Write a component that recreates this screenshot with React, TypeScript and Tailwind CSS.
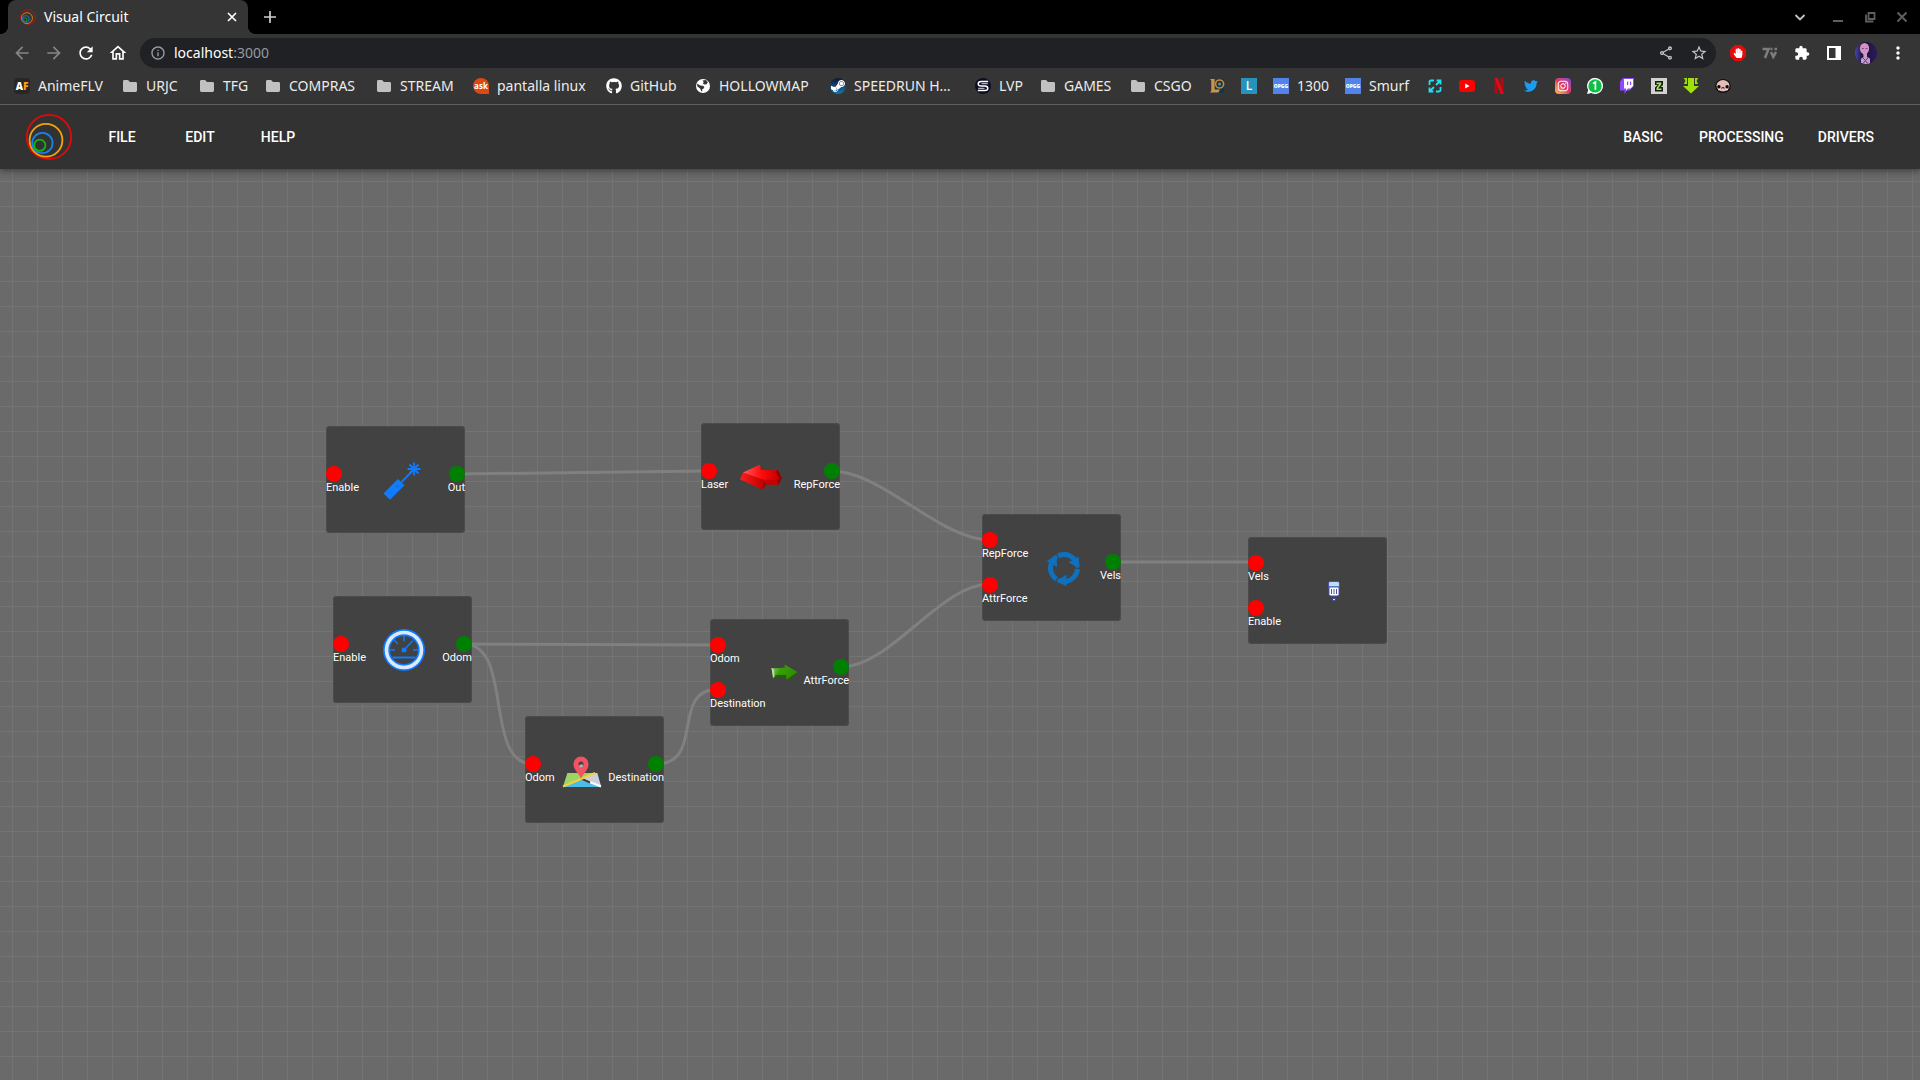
import type { ReactNode } from "react";
import { FaGithub, FaSteamSymbol, FaTwitter, FaInstagram, FaHandPaper } from "react-icons/fa";
import { MdArrowBack, MdArrowForward, MdRefresh, MdOutlineHome, MdExtension, MdMoreVert, MdStarOutline, MdOutlineInfo, MdOutlineShare } from "react-icons/md";

/* ---------- Brand mark ---------- */

function CircuitLogo({ className, dim }: { className: string; dim?: boolean }) {
  return (
    <svg viewBox="0 0 48 48" fill="none" strokeWidth={dim ? 3 : 1.8} opacity={dim ? 0.75 : 1} className={className} aria-hidden="true">
      <circle cx="24" cy="24" r="22.2" stroke="#e60808" />
      <circle cx="21" cy="27.3" r="16.4" stroke="#f5a10c" />
      <circle cx="17.4" cy="30" r="10.2" stroke="#1485ec" />
      <circle cx="14.8" cy="32.3" r="5.6" stroke="#14b314" />
    </svg>
  );
}

/* ---------- Bookmark icons ---------- */

function Svg16({ children }: { children: ReactNode }) {
  return (
    <svg viewBox="0 0 16 16" className="size-4 shrink-0" aria-hidden="true">
      {children}
    </svg>
  );
}

const folder = (
  <Svg16>
    <path d="M1 3.4Q1 2 2.4 2H6l2 2h5.6Q15 4 15 5.4v7.2q0 1.4-1.4 1.4H2.4Q1 14 1 12.6z" fill="#c1c1c1" />
  </Svg16>
);

const animeIcon = (
  <span className="flex size-4 shrink-0 items-center justify-center rounded-sm bg-[#272727] font-['Open_Sans',sans-serif] text-[10px] leading-none font-extrabold text-white">
    A<span className="text-[#ff9d14]">F</span>
  </span>
);

const askIcon = (
  <span className="flex size-4 shrink-0 items-center justify-center rounded-full rounded-br-xs bg-[#dd4814] font-['Open_Sans',sans-serif] text-[8px] leading-none font-bold text-white">
    ask
  </span>
);

const githubIcon = <FaGithub className="size-4 shrink-0 text-white" />;

const globeIcon = (
  <Svg16>
    <circle cx="8" cy="8" r="7" fill="#fff" />
    <path d="M2.3 5.6 5 7.4l3 .3 1.4 1.4-1 1.6-1.2.6v2.4l-1-.6-.9-2.4-3.1-2.5z M7.5 2.4 11 2l1.8 2.2-1.2 2-2.6.2-1.2-1.2 1-1z" fill="#343434" />
  </Svg16>
);

const steamIcon = (
  <span className="flex size-4 shrink-0 items-center justify-center overflow-hidden rounded-full bg-linear-to-b from-[#0c1735] to-[#1378ae]">
    <FaSteamSymbol className="size-4 text-white" />
  </span>
);

const lvpIcon = (
  <Svg16>
    <circle cx="8" cy="8" r="8" fill="#0c0c24" />
    <path d="M13.200 3.400H6.200Q3.200 3.400 3.200 5.700T6.200 8h3.600q3 0 3 2.300t-3 2.300H2.800" fill="none" stroke="#fff" strokeWidth="1.500" />
    <path d="M12.800 5.700H6.500M9.500 10.300H3.200" stroke="#d8d8e4" strokeWidth="1" />
  </Svg16>
);

const leagueIcon = (
  <Svg16>
    <path d="M9 1h6v14H5z" fill="#12364a" />
    <circle cx="10.6" cy="6" r="4" fill="none" stroke="#c08b3c" strokeWidth="1.6" />
    <circle cx="10.6" cy="6" r="1.5" fill="#6f8c86" />
    <path d="M1 1h4.600v10.500H11L9.400 14.600H1l1.300-1.800V2.600z" fill="#c9964a" />
  </Svg16>
);

const letterIcon = (
  <span className="flex size-4 shrink-0 items-center justify-center bg-[#2792ba] font-['Open_Sans',sans-serif] text-[12px] leading-none font-semibold text-white">
    L
  </span>
);

const opggIcon = (
  <span className="flex size-4 shrink-0 items-center justify-center bg-[#5383e8] font-['Open_Sans',sans-serif] text-[5px] leading-none font-extrabold text-white">
    OPGG
  </span>
);

const expandIcon = (
  <Svg16>
    <path d="M7 2.5H4Q2.5 2.5 2.5 4v3M9 13.5h3q1.5 0 1.5-1.5V9M9.6 2.5h3.9v3.9M6.4 13.5H2.5V9.6M13 3 9 7M3 13l4-4" fill="none" stroke="#1be3f7" strokeWidth="1.8" />
  </Svg16>
);

const youtubeIcon = (
  <Svg16>
    <rect x="0" y="2" width="16" height="12" rx="3" fill="#f00" />
    <path d="m6.2 5.6 4.4 2.4-4.4 2.4z" fill="#fff" />
  </Svg16>
);

const netflixIcon = (
  <Svg16>
    <path d="M3.600 0h3v16h-3zM9.600 0h3v16h-3z" fill="#b5090f" />
    <path d="M3.600 0h3l6 16h-3z" fill="#e50914" />
  </Svg16>
);

const twitterIcon = <FaTwitter className="size-4 shrink-0 p-px text-[#1d9bf0]" />;

const instagramIcon = (
  <span className="flex size-4 shrink-0 items-center justify-center rounded-sm bg-linear-to-tr from-[#fdc04b] via-[#e8305f] to-[#7a3bd0]">
    <FaInstagram className="size-3 text-white" />
  </span>
);

const whatsappIcon = (
  <Svg16>
    <path d="M0 16 1.2 12A8 8 0 1 1 4.4 15z" fill="#fff" />
    <circle cx="8" cy="7.9" r="6.7" fill="#0bbf47" />
    <path d="M6 5.4 8.4 4v7.8" fill="none" stroke="#fff" strokeWidth="1.7" />
  </Svg16>
);

const twitchIcon = (
  <Svg16>
    <path d="M4 0h11v8l-4.5 4.5H8L5.500 16V12.500H1V3.500z" fill="#9146ff" />
    <path d="M5 1h9v7l-2.500 2.500H9L7 12.400V10.500H5z" fill="#fff" />
    <path d="M8 3.500h1.200v3.500H8zM11 3.500h1.200v3.500H11z" fill="#9146ff" />
  </Svg16>
);

const zIcon = (
  <Svg16>
    <path d="M0 0h16v16H0z" fill="#d2d2d2" />
    <path d="M4 3h8v4L9.800 9H12v4.500H4V9.500L6.500 7H4z" fill="#151d10" />
    <path d="M5.500 4.500h4.800v1.700L7 10.500h3.500v1.500H5.500v-2l2.700-3.800H5.500z" fill="#a4e05d" />
  </Svg16>
);

const downloadIcon = (
  <Svg16>
    <path d="M5 0h6v8h5l-8 7.500L0 8h5z" fill="#a0e10d" />
    <path d="M1.200 0H4v6H1.200V4.500h1V1.500h-1zM14.800 0H12v6h2.800V4.500h-1V1.500h1z" fill="#a0e10d" />
  </Svg16>
);

const faceIcon = (
  <Svg16>
    <ellipse cx="8" cy="8" rx="7.800" ry="7" fill="#130d0d" />
    <ellipse cx="8" cy="7.800" rx="6.500" ry="5.700" fill="#e4bdb7" />
    <circle cx="3.900" cy="8.800" r="1.700" fill="#0a0808" />
    <circle cx="12.100" cy="8.800" r="1.700" fill="#0a0808" />
    <path d="M3 11h2v1.200H3zM11 11h2v1.200h-2z" fill="#cfeaf5" />
    <path d="M6.400 10.200q1.600-1.200 3.200 0" stroke="#0a0808" fill="none" />
  </Svg16>
);

const bookmarks: { name: string; icon: ReactNode; text?: string; width: string }[] = [
  { name: "AnimeFLV", icon: animeIcon, text: "AnimeFLV", width: "w-[92px]" },
  { name: "URJC", icon: folder, text: "URJC", width: "w-[61px]" },
  { name: "TFG", icon: folder, text: "TFG", width: "w-[50px]" },
  { name: "COMPRAS", icon: folder, text: "COMPRAS", width: "w-[95px]" },
  { name: "STREAM", icon: folder, text: "STREAM", width: "w-[81px]" },
  { name: "pantalla linux", icon: askIcon, text: "pantalla linux", width: "w-[117px]" },
  { name: "GitHub", icon: githubIcon, text: "GitHub", width: "w-[73px]" },
  { name: "HOLLOWMAP", icon: globeIcon, text: "HOLLOWMAP", width: "w-[119px]" },
  { name: "Speedrun", icon: steamIcon, text: "SPEEDRUN H…", width: "w-[129px]" },
  { name: "LVP", icon: lvpIcon, text: "LVP", width: "w-[49px]" },
  { name: "GAMES", icon: folder, text: "GAMES", width: "w-[74px]" },
  { name: "CSGO", icon: folder, text: "CSGO", width: "w-[63px]" },
  { name: "League", icon: leagueIcon, width: "w-4" },
  { name: "L", icon: letterIcon, width: "w-4" },
  { name: "1300", icon: opggIcon, text: "1300", width: "w-14" },
  { name: "Smurf", icon: opggIcon, text: "Smurf", width: "w-[66px]" },
  { name: "Expand", icon: expandIcon, width: "w-4" },
  { name: "YouTube", icon: youtubeIcon, width: "w-4" },
  { name: "Netflix", icon: netflixIcon, width: "w-4" },
  { name: "Twitter", icon: twitterIcon, width: "w-4" },
  { name: "Instagram", icon: instagramIcon, width: "w-4" },
  { name: "WhatsApp", icon: whatsappIcon, width: "w-4" },
  { name: "Twitch", icon: twitchIcon, width: "w-4" },
  { name: "Z", icon: zIcon, width: "w-4" },
  { name: "Downloads", icon: downloadIcon, width: "w-4" },
  { name: "Isaac", icon: faceIcon, width: "w-4" },
];

/* ---------- Browser chrome ---------- */

function TabStrip() {
  return (
    <div className="flex h-[34px] items-stretch bg-black pl-2">
      <div className="relative flex w-60 items-center rounded-t-lg bg-[#353535] pr-2 pl-3 text-white">
        <span className="absolute bottom-0 -left-2 size-2 bg-[radial-gradient(circle_at_0_0,#000_8px,#353535_8px)]" />
        <span className="absolute -right-2 bottom-0 size-2 bg-[radial-gradient(circle_at_100%_0,#000_8px,#353535_8px)]" />
        <CircuitLogo className="size-4" dim />
        <span className="ml-2 flex-1 text-[14px] leading-5">Visual Circuit</span>
        <button aria-label="Close tab" className="flex size-4 items-center justify-center">
          <svg viewBox="0 0 16 16" className="size-4" stroke="#fff" strokeWidth="1.700">
            <path d="m4 4 8 8M12 4l-8 8" />
          </svg>
        </button>
      </div>
      <button aria-label="New tab" className="ml-3.5 flex w-4 items-center justify-center">
        <svg viewBox="0 0 16 16" className="size-4" stroke="#cfcfcf" strokeWidth="1.700">
          <path d="M8 2v12M2 8h12" />
        </svg>
      </button>
      <div className="ml-auto flex items-center gap-4 pr-2.5">
        <button aria-label="Search tabs" className="mr-1.5">
          <svg viewBox="0 0 16 16" className="size-4" fill="none" stroke="#c4c4c4" strokeWidth="1.800">
            <path d="m3.500 6 4.500 4.500L12.500 6" />
          </svg>
        </button>
        <button aria-label="Minimize">
          <svg viewBox="0 0 16 16" className="size-4" stroke="#5f5f5f" strokeWidth="2">
            <path d="M3 12h10" />
          </svg>
        </button>
        <button aria-label="Restore">
          <svg viewBox="0 0 16 16" className="size-4" fill="none" stroke="#5f5f5f" strokeWidth="1.800">
            <path d="M6.500 4h6v6h-6zM4 5.500v7h7.500" />
          </svg>
        </button>
        <button aria-label="Close window">
          <svg viewBox="0 0 16 16" className="size-4" stroke="#5f5f5f" strokeWidth="2">
            <path d="m3.500 3.500 9 9M12.500 3.500l-9 9" />
          </svg>
        </button>
      </div>
    </div>
  );
}

function Toolbar() {
  return (
    <div className="flex h-[38px] items-center bg-[#353535] pr-3.5">
      <div className="flex items-center gap-3 pr-3 pl-3 text-white">
        <button aria-label="Back"><MdArrowBack className="size-5 text-[#868686]" /></button>
        <button aria-label="Forward"><MdArrowForward className="size-5 text-[#868686]" /></button>
        <button aria-label="Reload"><MdRefresh className="size-5" /></button>
        <button aria-label="Home"><MdOutlineHome className="size-5" /></button>
      </div>
      <label className="flex h-[30px] flex-1 items-center rounded-full bg-[#202124] pr-2 pl-2.5">
        <MdOutlineInfo className="size-4 text-[#9a9fa4]" />
        <span className="relative ml-2 flex flex-1 text-[14px] leading-5 text-[#9299a0]">
          <span className="pointer-events-none absolute inset-0" aria-hidden="true"><span className="text-white">localhost</span>:3000</span>
          <input aria-label="Address" defaultValue="localhost:3000" className="w-full bg-transparent text-transparent outline-none" />
        </span>
        <button aria-label="Share" className="mr-4"><MdOutlineShare className="size-4 text-[#c4c6c9]" /></button>
        <button aria-label="Bookmark this page"><MdStarOutline className="size-[18px] text-[#c4c6c9]" /></button>
      </label>
      <div className="flex items-center gap-4 pl-3.5">
        <button aria-label="Ad blocker" className="flex size-4 items-center justify-center bg-[#e30b0b] [clip-path:polygon(30%_0,70%_0,100%_30%,100%_70%,70%_100%,30%_100%,0_70%,0_30%)]">
          <FaHandPaper className="size-2.5 text-white" />
        </button>
        <button aria-label="7TV">
          <svg viewBox="0 0 16 16" className="size-4" fill="none" stroke="#7d7d7d" strokeWidth="2.600">
            <path d="M.500 4h6L3 13M9 7l2.300 4.800L14 7M8.500 4h2M12.500 4H15" />
          </svg>
        </button>
        <button aria-label="Extensions"><MdExtension className="size-4 text-white" /></button>
        <button aria-label="Side panel">
          <svg viewBox="0 0 16 16" className="size-4">
            <path fillRule="evenodd" d="M1 1h14v14H1zM3 3v10h6.500V3z" fill="#fff" />
          </svg>
        </button>
        <button aria-label="Profile" className="-mx-[3px]">
          <svg viewBox="0 0 22 22" className="size-[22px]">
            <defs>
              <linearGradient id="avatar" x2="1">
                <stop offset="0" stopColor="#4c45a8" />
                <stop offset=".35" stopColor="#18123c" />
                <stop offset="1" stopColor="#2c1a5c" />
              </linearGradient>
            </defs>
            <circle cx="11" cy="11" r="11" fill="url(#avatar)" />
            <ellipse cx="9.500" cy="6.500" rx="4.600" ry="5.600" fill="#d493c3" />
            <path d="M8 10h4v5l3 1.500v4.700A11 11 0 0 1 6 20.800v-4L8.500 15z" fill="#c79acb" />
            <path d="m8 16 2.500 2.500L13 16M8.500 21l2-2.500 2 3" stroke="#3f4a7c" fill="none" />
            <path d="M6.800 6.500h2M10.500 6.500h2" stroke="#7a4a86" />
          </svg>
        </button>
        <button aria-label="Menu" className="-mx-0.5"><MdMoreVert className="size-5 text-white" /></button>
      </div>
    </div>
  );
}

function BookmarksBar() {
  return (
    <nav aria-label="Bookmarks" className="flex h-[33px] items-center gap-4 border-b border-[#656565] bg-[#353535] pb-1 pl-3.5">
      {bookmarks.map((b) => (
        <a key={b.name} href="#" aria-label={b.name} className={`flex shrink-0 items-center gap-2 text-[14px] leading-5 whitespace-nowrap text-[#ececec] ${b.width}`}>
          {b.icon}
          {b.text && <span>{b.text}</span>}
        </a>
      ))}
    </nav>
  );
}

/* ---------- Application header ---------- */

function MenuButton({ children }: { children: string }) {
  return (
    <button className="h-9 min-w-16 px-2.5 text-center text-[14px] leading-6 font-medium text-white">{children}</button>
  );
}

function AppHeader() {
  return (
    <header className="relative z-10 flex h-16 items-center bg-[#323232] pr-9 pl-[25px] font-[Roboto,sans-serif] shadow-[0_2px_4px_-1px_rgba(0,0,0,0.2),0_4px_5px_rgba(0,0,0,0.14),0_1px_10px_rgba(0,0,0,0.12)]">
      <CircuitLogo className="size-12" />
      <nav className="ml-[17px] flex gap-3.5">
        <MenuButton>FILE</MenuButton>
        <MenuButton>EDIT</MenuButton>
        <MenuButton>HELP</MenuButton>
      </nav>
      <nav className="ml-auto flex gap-3.5">
        <MenuButton>BASIC</MenuButton>
        <MenuButton>PROCESSING</MenuButton>
        <MenuButton>DRIVERS</MenuButton>
      </nav>
    </header>
  );
}

/* ---------- Block icons ---------- */

const laserIcon = (
  <svg viewBox="0 0 40 40" className="size-10" stroke="#0f7bff" fill="none">
    <path d="M.500 33.500 15 19l6.500 6.200L7 39.700z" fill="#0f7bff" stroke="none" />
    <path d="M18.500 22 30 10.500" strokeWidth="1.800" />
    <path d="M31 2.500v13M24.500 9h13M26.500 4.500l9 9M35.500 4.500l-9 9" strokeWidth="1.800" />
    <circle cx="14" cy="26.500" r="1" fill="#2866b4" stroke="none" />
  </svg>
);

const gaugeIcon = (
  <svg viewBox="0 0 42 42" className="size-[42px]" fill="none" stroke="#0f7bff">
    <circle cx="21" cy="21" r="17.500" strokeWidth="7" />
    <circle cx="21" cy="21" r="17.500" stroke="#dbe9fb" strokeWidth="3.600" />
    <path d="M9.500 28.500h23" strokeWidth="2" />
    <path d="M21 7v5.500M6.500 21H12M30 21h5.500M11 11l4 4M21 21l9-9.500" strokeWidth="1.500" />
    <circle cx="21" cy="21" r="2.500" fill="#0f7bff" stroke="none" />
  </svg>
);

const mapIcon = (
  <svg viewBox="0 0 40 40" className="size-10">
    <path d="M5.500 23h30L39 37H1z" fill="#4bbde8" />
    <path d="M5.500 23h26L1.500 35.500z" fill="#a0d35f" />
    <path d="m20 28 11-5h4l4 13z" fill="#cbcfd9" />
    <path d="m19 28.500 20 8" stroke="#fff" strokeWidth="2" />
    <path d="m19 28.500 9 4" stroke="#3a3a3a" strokeWidth="2" />
    <path d="M1 36.500 33 23" stroke="#f9cf3f" strokeWidth="2" />
    <path fillRule="evenodd" d="M19 29c-1-5-7.500-8-7.500-15a7.500 7.500 0 0 1 15 0c0 7-6.500 10-7.500 15m0-17.500a2.500 2.500 0 1 0 0 5 2.500 2.500 0 0 0 0-5" fill="#f25363" />
    <path d="M17 15.500a2 2 0 0 0 4 0l-1-1.500z" fill="#aab0b6" />
  </svg>
);

const redArrowIcon = (
  <svg viewBox="0 0 42 40" className="h-10 w-[42px]">
    <defs>
      <linearGradient id="red-top" x2="1">
        <stop offset="0" stopColor="#ff5b5b" />
        <stop offset=".5" stopColor="#ff0a0a" />
        <stop offset="1" stopColor="#c00000" />
      </linearGradient>
      <linearGradient id="red-side" x2="1">
        <stop offset="0" stopColor="#ff1d1d" />
        <stop offset="1" stopColor="#b80000" />
      </linearGradient>
    </defs>
    <path d="M22 23h17.500l-1.500 5-12-.500z" fill="#c40000" />
    <path d="M38 13 41.700 21.500 38.500 28l-3-9z" fill="#8d0000" />
    <path d="M3 15.500 20 7.500l1 5.500 17 .200 2.500 9.300L27 22l-2 4.500z" fill="url(#red-top)" />
    <path d="M38 13 41.700 21.500 40 23l-4.500-8z" fill="#930000" />
    <path d="m3 15.500 22 7.500-2 9.700L0 22.500z" fill="url(#red-side)" />
    <path d="m25 23 1 4.500-3 5.200z" fill="#9c0000" />
  </svg>
);

const greenArrowIcon = (
  <svg viewBox="0 0 28 18" className="h-[18px] w-7">
    <defs>
      <linearGradient id="green-body" x2="1" y2=".3">
        <stop offset="0" stopColor="#9fce82" />
        <stop offset=".4" stopColor="#3a9f09" />
        <stop offset="1" stopColor="#2f8a06" />
      </linearGradient>
    </defs>
    <path d="M.500 4Q7 4.500 14 3.500L13.500.500 27 8 16.500 17.300 15 13Q8 12.500 2 14z" fill="#216503" />
    <path d="M.500 4Q7 4.500 14 3.500L13.500.500 26.500 8 15.500 15.500 15.200 11Q8 10 2 12z" fill="url(#green-body)" />
    <path d="M.500 4 3 5.500 3.500 13 2 14z" fill="#bfdcae" />
  </svg>
);

const loopIcon = (
  <svg viewBox="0 0 36 36" className="size-9" fill="#0f70bd">
    <circle cx="18" cy="18" r="13.500" fill="none" stroke="#0f70bd" strokeWidth="5" />
    {[0, 120, 240].map((angle) => (
      <g key={angle} transform={`rotate(${angle} 18 18)`}>
        <path d="M13.500 26.500 9.800 31 13 34.500" fill="none" stroke="#424242" strokeWidth="1.200" />
        <path d="M20.500 24.500V36.500L10.800 31z" />
      </g>
    ))}
  </svg>
);

const motorIcon = (
  <svg viewBox="0 0 14 22" className="h-[22px] w-3.5">
    <path d="M2.500 1.500h9l1 1.500v4h-11V3z" fill="#bbdefb" stroke="#4254b0" />
    <path d="M2 7h10v7.500L10.500 16h-7L2 14.500z" fill="#fff" stroke="#4254b0" />
    <path d="M4.500 9v5M7 9v5M9.500 9v5" stroke="#4254b0" />
    <rect x="6" y="18.500" width="2" height="2" fill="#bbdefb" stroke="#4254b0" />
  </svg>
);

/* ---------- Diagram ---------- */

type Block = { name: string; place: string; inputs: string[]; outputs: string[]; icon: ReactNode };

const blocks: Block[] = [
  { name: "Laser", place: "left-[326px] top-[257px]", inputs: ["Enable"], outputs: ["Out"], icon: laserIcon },
  { name: "Odometer", place: "left-[333px] top-[427px]", inputs: ["Enable"], outputs: ["Odom"], icon: gaugeIcon },
  { name: "Destination", place: "left-[525px] top-[547px]", inputs: ["Odom"], outputs: ["Destination"], icon: mapIcon },
  { name: "Repulsive force", place: "left-[701px] top-[254px]", inputs: ["Laser"], outputs: ["RepForce"], icon: redArrowIcon },
  { name: "Attractive force", place: "left-[710px] top-[450px]", inputs: ["Odom", "Destination"], outputs: ["AttrForce"], icon: greenArrowIcon },
  { name: "Controller", place: "left-[982px] top-[345px]", inputs: ["RepForce", "AttrForce"], outputs: ["Vels"], icon: loopIcon },
  { name: "Motors", place: "left-[1248px] top-[368px]", inputs: ["Vels", "Enable"], outputs: [], icon: motorIcon },
];

const links = [
  "M457 305C507 305 659 302 709 302",
  "M464 475C514 475 669 476 719 476",
  "M464 475C514 475 483 595 533 595",
  "M656 595C706 595 669 520 719 520",
  "M832 302C882 302 940 371 990 371",
  "M841 498C891 498 940 415 990 415",
  "M1112 393C1162 393 1206 393 1256 393",
];

function Ports({ names, output }: { names: string[]; output?: boolean }) {
  return (
    <div className={`flex flex-col justify-center gap-[18px] ${output ? "items-end" : "items-start"}`}>
      {names.map((name) => (
        <div key={name} className={`flex flex-col ${output ? "items-end" : "items-start"}`}>
          <span className={`size-4 rounded-full ${output ? "bg-[#008000]" : "bg-[#ff0000]"}`} />
          <span className="text-[11px] leading-[11px] text-white">{name}</span>
        </div>
      ))}
    </div>
  );
}

function BlockNode({ block }: { block: Block }) {
  return (
    <section aria-label={block.name} className={`absolute flex h-[107px] w-[139px] rounded-sm bg-[#424242] shadow-[inset_0_0_0_1px_#4b4b4b] ${block.place}`}>
      <Ports names={block.inputs} />
      <div className="flex min-w-0 flex-1 items-center justify-center">{block.icon}</div>
      <Ports names={block.outputs} output />
    </section>
  );
}

function Canvas() {
  return (
    <main className="relative flex-1 overflow-hidden bg-[#6a6a6a] bg-[linear-gradient(to_right,transparent_12px,#747474_12px,#747474_13px,transparent_13px),linear-gradient(to_bottom,transparent_12px,#747474_12px,#747474_13px,transparent_13px)] bg-size-[25px_25px] font-[Roboto,sans-serif]">
      <svg className="absolute inset-0 size-full" fill="none" stroke="#808080" strokeWidth="3" aria-hidden="true">
        {links.map((d) => (
          <path key={d} d={d} />
        ))}
      </svg>
      {blocks.map((b) => (
        <BlockNode key={b.name} block={b} />
      ))}
    </main>
  );
}

export default function App() {
  return (
    <div className="flex h-screen flex-col overflow-hidden font-['Noto_Sans',sans-serif]">
      <TabStrip />
      <Toolbar />
      <BookmarksBar />
      <AppHeader />
      <Canvas />
    </div>
  );
}
